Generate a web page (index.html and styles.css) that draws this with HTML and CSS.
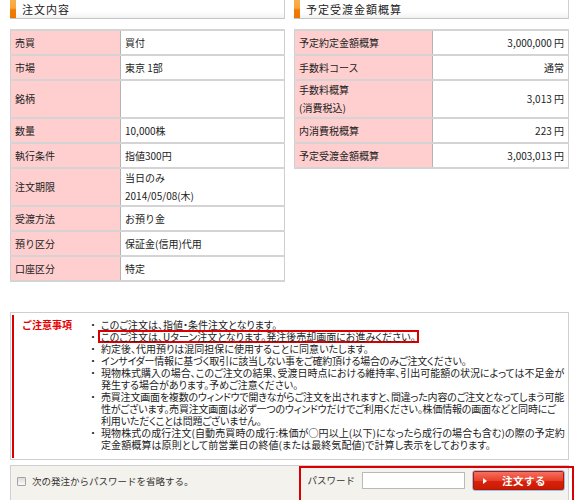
FILE: index.html
```html
<!DOCTYPE html>
<html lang="ja">
<head>
<meta charset="utf-8">
<title>注文確認</title>
<link rel="stylesheet" href="styles.css">
</head>
<body>
<div class="page">
  <div class="cols">
    <section class="panel">
      <h2 class="sec-head">注文内容</h2>
      <table class="info info-left">
        <colgroup><col class="c-label"><col></colgroup>
        <tr><th>売買</th><td>買付</td></tr>
        <tr><th>市場</th><td>東京 1部</td></tr>
        <tr class="tall"><th>銘柄</th><td></td></tr>
        <tr><th>数量</th><td>10,000株</td></tr>
        <tr><th>執行条件</th><td>指値300円</td></tr>
        <tr><th>注文期限</th><td>当日のみ<br>2014/05/08(木)</td></tr>
        <tr><th>受渡方法</th><td>お預り金</td></tr>
        <tr><th>預り区分</th><td>保証金(信用)代用</td></tr>
        <tr><th>口座区分</th><td>特定</td></tr>
      </table>
    </section>
    <section class="panel">
      <h2 class="sec-head">予定受渡金額概算</h2>
      <table class="info info-right">
        <colgroup><col class="c-label-r"><col></colgroup>
        <tr><th>予定約定金額概算</th><td>3,000,000 円</td></tr>
        <tr><th>手数料コース</th><td>通常</td></tr>
        <tr><th>手数料概算<br>(消費税込)</th><td>3,013 円</td></tr>
        <tr><th>内消費税概算</th><td>223 円</td></tr>
        <tr><th>予定受渡金額概算</th><td>3,003,013 円</td></tr>
      </table>
    </section>
  </div>

  <div class="notice">
    <div class="notice-body">
      <div class="notice-title">ご注意事項</div>
      <ul class="notice-list">
        <li><span class="txt">このご注文は、指値・条件注文となります。</span></li>
        <li><span class="txt"><span class="mark">このご注文は、Uターン注文となります。発注後売却画面にお進みください。</span></span></li>
        <li><span class="txt">約定後、代用預りは混同担保に使用することに同意いたします。</span></li>
        <li class="tight"><span class="txt">インサイダー情報に基づく取引に該当しない事をご確約頂ける場合のみご注文ください。</span></li>
        <li><span class="txt">現物株式購入の場合、このご注文の結果、受渡日時点における維持率、引出可能額の状況によっては不足金が<br>発生する場合があります。予めご注意ください。</span></li>
        <li class="tight"><span class="txt">売買注文画面を複数のウィンドウで開きながらご注文を出されますと、間違った内容のご注文となってしまう可能<br>性がございます。売買注文画面は必ず一つのウィンドウだけでご利用ください。株価情報の画面などと同時にご<br>利用いただくことは問題ございません。</span></li>
        <li class="loose"><span class="txt">現物株式の成行注文(自動売買時の成行:株価が○円以上(以下)になったら成行の場合も含む)の際の予定約<br>定金額概算は原則として前営業日の終値(または最終気配値)で計算し表示をしております。</span></li>
      </ul>
    </div>
  </div>

  <div class="bottom">
    <label class="skip"><input type="checkbox"><span>次の発注からパスワードを省略する。</span></label>
    <div class="pw">
      <span class="pw-label">パスワード</span>
      <input type="password" class="pw-input">
      <button type="button" class="order-btn">注文する</button>
    </div>
  </div>
</div>
</body>
</html>
```

FILE: styles.css
```css
html, body {
  margin: 0;
  padding: 0;
}
body {
  width: 580px;
  height: 500px;
  overflow: hidden;
  background: #fff;
  color: #222;
  font-family: "Noto Sans CJK JP", "Noto Sans", sans-serif;
}
.page {
  padding: 0 11px 0 10px;
}
.cols {
  display: grid;
  grid-template-columns: 275px 275px;
  column-gap: 9px;
  align-items: start;
}
.sec-head {
  margin: 0;
  height: 19px;
  box-sizing: border-box;
  border-right: 1px solid #cfcfcf;
  border-bottom: 1px solid #c4c4c4;
  background: linear-gradient(#fff, #fff 65%, #f2f2f2);
  display: flex;
  align-items: center;
  font-size: 11px;
  font-weight: normal;
  letter-spacing: 1px;
  color: #222;
}
.sec-head::before {
  content: "";
  align-self: stretch;
  width: 6px;
  margin-right: 6px;
  background: linear-gradient(#f9b04c 0%, #f9a63c 45%, #f07d00 55%, #ee7600 100%);
}
.info {
  width: 100%;
  margin-top: 10px;
  border-collapse: collapse;
  table-layout: fixed;
  font-size: 10px;
}
.c-label { width: 110px; }
.c-label-r { width: 138px; }
.info th, .info td {
  height: 23px;
  padding: 0 4px;
  line-height: 18px;
  border-top: 2px solid #d4d4d4;
  border-bottom: 2px solid #d4d4d4;
  font-weight: normal;
  text-align: left;
  vertical-align: middle;
}
.info th {
  background: #ffcfcf;
  border-left: 1px solid #cfcfcf;
  border-right: 1px solid #b4b4b4;
}
.info td {
  background: #fff;
  border-right: 1px solid #cfcfcf;
}
.info .tall th, .info .tall td {
  height: 36px;
}
.info-right td {
  text-align: right;
}

.notice {
  margin-top: 30px;
  border: 1px solid #cfcfcf;
  padding: 2px 0 1px 1px;
}
.notice-body {
  display: flex;
  border-left: 2px solid #d80000;
  padding: 4px 0 7px 8px;
}
.notice-title {
  flex: 0 0 66px;
  color: #e60000;
  font-weight: bold;
  font-size: 10px;
  line-height: 12px;
}
.notice-list {
  margin: 0;
  padding: 0;
  list-style: none;
  font-size: 10px;
  line-height: 12px;
  white-space: nowrap;
  color: #222;
  font-feature-settings: "palt";
}
.notice-list li {
  display: flex;
}
.notice-list li.tight {
  letter-spacing: -0.2px;
}
.notice-list li.loose {
  letter-spacing: 0.1px;
}
.notice-list li::before {
  content: "・";
  flex: 0 0 13px;
  font-feature-settings: normal;
  letter-spacing: 0;
}
.mark {
  display: inline-block;
  vertical-align: baseline;
  line-height: 9px;
  border: 2px solid #d80000;
  padding: 0 1px 0 1px;
  margin: -1px 0 -1px -3px;
}

.bottom {
  margin-top: 5px;
  height: 40px;
  border: 1px solid #cfcfcf;
  background: #f4f2ec;
  display: flex;
  justify-content: space-between;
  align-items: flex-start;
}
.skip {
  display: flex;
  align-items: center;
  gap: 6px;
  height: 30px;
  padding-left: 6px;
  font-size: 9.5px;
  color: #333;
}
.skip input {
  appearance: none;
  -webkit-appearance: none;
  box-sizing: border-box;
  width: 9px;
  height: 9px;
  margin: 0;
  border: 1px solid #a3a3a3;
  border-radius: 1px;
  background: linear-gradient(#dcdcdc, #fafafa);
}
.pw {
  display: flex;
  align-items: flex-start;
  gap: 7px;
  height: 40px;
  padding: 2px 7px 0 6px;
  margin-right: -6px;
  border: 2px solid #d80000;
  font-size: 9.5px;
  color: #333;
}
.pw-label {
  line-height: 21px;
}
.pw-input {
  box-sizing: border-box;
  width: 103px;
  height: 17px;
  margin: 2px 0 0;
  padding: 0;
  border: 1px solid #b9b9b9;
  background: #fff;
}
.order-btn {
  box-sizing: border-box;
  width: 93px;
  height: 21px;
  margin: 0;
  padding: 0 0 0 10px;
  display: flex;
  align-items: center;
  border: 1px solid #9dbfe8;
  border-radius: 3px;
  background: linear-gradient(#f57566, #ea3f28 50%, #d9220b 52%, #c81a04);
  box-shadow: inset 0 0 0 1px #b81400;
  color: #fff;
  font-family: "Noto Sans CJK JP", sans-serif;
  font-size: 10.5px;
  font-weight: bold;
  letter-spacing: 0.5px;
}
.order-btn::before {
  content: "";
  width: 0;
  height: 0;
  border-left: 4px solid #fff;
  border-top: 3px solid transparent;
  border-bottom: 3px solid transparent;
  margin-right: 15px;
}
```
